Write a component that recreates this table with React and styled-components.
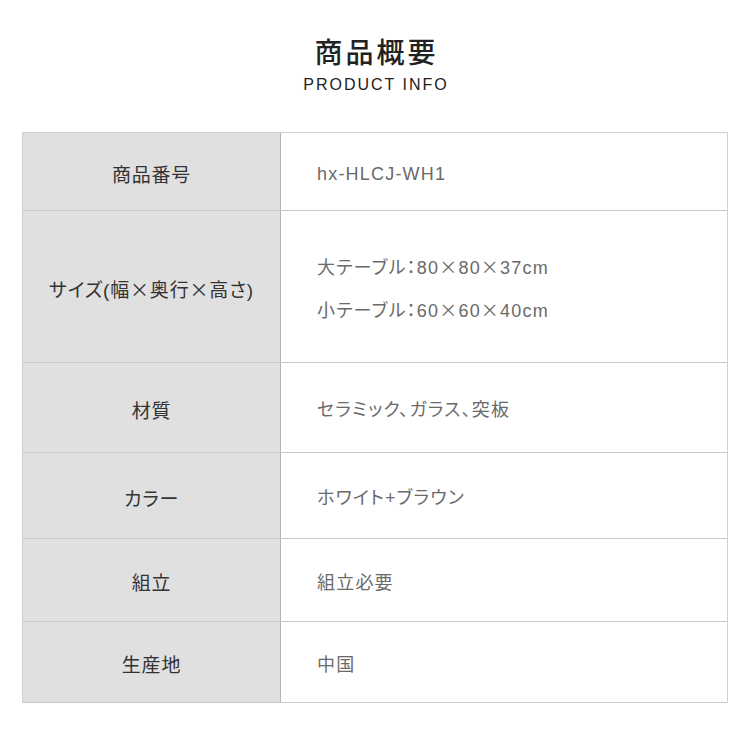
import React from "react";
import { styled, createGlobalStyle } from "styled-components";

const rows = [
  { label: "商品番号", values: ["hx-HLCJ-WH1"], height: 78 },
  {
    label: "サイズ(幅×奥行×高さ)",
    values: ["大テーブル：80×80×37cm", "小テーブル：60×60×40cm"],
    height: 152,
  },
  { label: "材質", values: ["セラミック、ガラス、突板"], height: 90 },
  { label: "カラー", values: ["ホワイト+ブラウン"], height: 86 },
  { label: "組立", values: ["組立必要"], height: 83 },
  { label: "生産地", values: ["中国"], height: 81 },
];

// × だけ和文フォントで表示する
const WithTimes = ({ text }) =>
  text.split("×").map((part, i) => (
    <React.Fragment key={i}>
      {i > 0 && <Times>×</Times>}
      {part}
    </React.Fragment>
  ));

const App = () => {
  return (
    <>
      <GlobalStyle />
      <Page>
        <Header>
          <Title>商品概要</Title>
          <SubTitle>PRODUCT INFO</SubTitle>
        </Header>
        <Table>
          {rows.map((row) => (
            <Row key={row.label} $height={row.height}>
              <Label>
                <WithTimes text={row.label} />
              </Label>
              <Value>
                {row.values.map((v) => (
                  <Line key={v}>
                    <WithTimes text={v} />
                  </Line>
                ))}
              </Value>
            </Row>
          ))}
        </Table>
      </Page>
    </>
  );
};

export default App;

// スタイル
const GlobalStyle = createGlobalStyle`
  body {
    margin: 0;
    background: #fff;
    font-family: "Liberation Sans", "Noto Sans CJK JP", sans-serif;
  }
`;

const Page = styled.div`
  width: 750px;
  height: 750px;
  padding: 0 22px;
  box-sizing: border-box;
`;

const Header = styled.div`
  display: flex;
  flex-direction: column;
  align-items: center;
  padding-top: 32px;
  height: 132px;
  box-sizing: border-box;
`;

const Title = styled.h1`
  margin: 0;
  font-family: "Noto Sans CJK JP", sans-serif;
  font-size: 28px;
  font-weight: 500;
  line-height: 38px;
  letter-spacing: 3px;
  padding-left: 3px;
  color: #222;
`;

const SubTitle = styled.div`
  margin-top: 6px;
  font-size: 16px;
  letter-spacing: 2px;
  padding-left: 2px;
  color: #222;
`;

const Table = styled.div`
  border: 1px solid #d0d0d0;
  border-bottom: none;
`;

const Row = styled.div`
  display: grid;
  grid-template-columns: 258px 1fr;
  height: ${(props) => props.$height}px;
  border-bottom: 1px solid #c8c8c8;
  box-sizing: border-box;
`;

const Label = styled.div`
  display: flex;
  align-items: center;
  justify-content: center;
  padding-top: 3px;
  background: #e0e0e0;
  border-right: 1px solid #b4b4b4;
  font-size: 19px;
  letter-spacing: 0.8px;
  font-feature-settings: "palt";
  color: #333;
`;

const Times = styled.span`
  font-family: "Noto Sans CJK JP", sans-serif;
  font-feature-settings: normal;
  line-height: 1;
`;

const Value = styled.div`
  display: flex;
  flex-direction: column;
  justify-content: center;
  gap: 13px;
  padding-left: 36px;
  padding-top: 5px;
  font-size: 18px;
  letter-spacing: 1.2px;
  font-feature-settings: "palt";
  color: #6a6a6a;
`;

const Line = styled.div`
  line-height: 30px;
`;
